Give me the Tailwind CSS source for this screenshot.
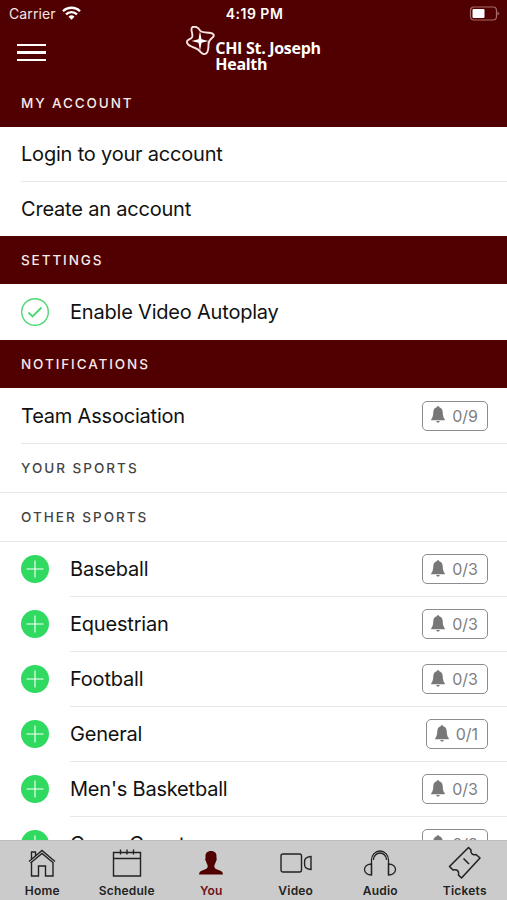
<!DOCTYPE html>
<html lang="en">
<head>
    <meta charset="UTF-8">
    <meta name="viewport" content="width=device-width, initial-scale=1.0">
    <title>You - Account &amp; Notifications</title>
    <script src="https://cdn.jsdelivr.net/npm/@tailwindcss/browser@4"></script>
</head>
<body class="bg-white font-['Inter','Liberation_Sans',sans-serif] text-[#111]">
    <!-- Shared icons -->
    <svg class="hidden">
        <symbol id="bell" viewBox="0 0 14 17">
            <path d="M7 0.3c.9 0 1.2.5 1.3 1 2.3.7 3.3 2.400 3.400 4.800.1 3.600.6 5.600 2.100 7.200v.9H.2v-.9c1.500-1.600 2-3.600 2.100-7.200.1-2.400 1.100-4.100 3.400-4.800.1-.5.4-1 1.300-1zM5.300 14.900h3.400c-.1 1-.8 1.600-1.700 1.600s-1.600-.6-1.700-1.600z" fill="#777"/>
        </symbol>
        <symbol id="plus" viewBox="0 0 28 28">
            <circle cx="14" cy="14" r="14" fill="#30d960"/>
            <path d="M14 5.500v17M5.500 14h17" stroke="#fff" stroke-width="1.100"/>
        </symbol>
    </svg>

    <div class="flex flex-col h-[900px] overflow-hidden">
        <!-- Header -->
        <header class="shrink-0 bg-[#500000] text-white">
            <div class="grid grid-cols-3 items-center h-[27px] pl-[9px] pr-[7px] text-[14px]">
                <div class="flex items-center gap-[6px] text-[#f5e6e4]">
                    <span class="tracking-[0.1px]">Carrier</span>
                    <svg class="w-[19px] h-[14px] -mt-[2px]" viewBox="0 0 19 14" fill="none" stroke="#fff" stroke-width="2.300">
                        <path d="M1 5.200a12.200 12.200 0 0 1 17 0M4 8.400a7.800 7.800 0 0 1 11 0"/>
                        <path d="M9.500 13.800L6.500 10.800a4.300 4.300 0 0 1 6 0z" fill="#fff" stroke="none"/>
                    </svg>
                </div>
                <span class="text-center font-semibold tracking-[0.5px]">4:19 PM</span>
                <svg class="justify-self-end w-[31px] h-[15px]" viewBox="0 0 31 15">
                    <rect x="1.500" y="1" width="26" height="13" rx="3.500" fill="none" stroke="#a86a66" stroke-width="1.200"/>
                    <rect x="3.500" y="3" width="12" height="9" rx="1" fill="#fff"/>
                    <path d="M28.500 5.500v4l2-2z" fill="#a86a66"/>
                </svg>
            </div>
            <div class="grid grid-cols-3 h-[52px] px-[17px]">
                <button class="flex flex-col gap-[5px] mt-[17px] h-[17px] w-[29px]">
                    <span class="block h-[2.5px] w-full bg-white"></span>
                    <span class="block h-[2.5px] w-full bg-white"></span>
                    <span class="block h-[2.5px] w-full bg-white"></span>
                </button>
                <div class="flex justify-center">
                    <svg class="shrink-0 w-[29px] h-[30px] -mt-[1px]" viewBox="0 0 29 30">
                        <path d="M6.500 1C9.500.3 12.500 1.500 14 4.500c1.500 2 4.500 2 9.500 2.300 4.500.3 5.300 2.700 3 4.700-3 2.300-4 4-4 6.500 0 3.500.2 6.500-1.800 9-2 1.800-4.200 1.300-6-.8-1.500-2.500-4.500-4-8.200-5.200C3 19.500.3 17.500 1 15.300c.5-1.800 3-1.800 5-4C7.800 8.500 3.500 3 6.500 1z" fill="none" stroke="#f7e4e2" stroke-width="1.900"/>
                        <path d="M14 5l1.500 8.300 7 1.700-7 1.700L14 25l-1.500-8.300-7-1.700 7-1.700z" fill="#fff"/>
                    </svg>
                    <div class="mt-[13px] font-['Open_Sans','Noto_Sans',sans-serif] font-bold text-[16px] leading-[16px] tracking-[-0.3px] whitespace-nowrap">
                        <div>CHI St. Joseph</div>
                        <div>Health</div>
                    </div>
                </div>
            </div>
            <h2 class="flex items-center h-[48px] px-[21px] text-[13.5px] font-medium tracking-[1.9px] text-[#f7ebe9]">MY ACCOUNT</h2>
        </header>

        <!-- Settings list -->
        <main class="flex-1 min-h-0 overflow-hidden text-[20px] tracking-[-0.2px]">
            <div class="pl-[21px]">
                <div class="flex items-center h-[55px] border-b border-[#e8e8e8]">Login to your account</div>
                <div class="flex items-center h-[54px] pb-[1px]">Create an account</div>
            </div>

            <h2 class="flex items-center h-[48px] px-[21px] bg-[#500000] text-[13.5px] font-medium tracking-[1.9px] text-[#f7ebe9]">SETTINGS</h2>
            <div class="flex items-center h-[56px] pl-[21px] gap-[21px]">
                <svg class="w-[28px] h-[28px]" viewBox="0 0 28 28" fill="none" stroke="#4cd972">
                    <circle cx="14" cy="14" r="13.300" stroke-width="1.400"/>
                    <path d="M7.500 14.500l4 4L20.500 9.500" stroke-width="1.900"/>
                </svg>
                Enable Video Autoplay
            </div>

            <h2 class="flex items-center h-[48px] px-[21px] bg-[#500000] text-[13.5px] font-medium tracking-[1.9px] text-[#f7ebe9]">NOTIFICATIONS</h2>
            <div class="pl-[21px]">
                <div class="flex items-center justify-between h-[56px] pr-[19px] border-b border-[#e8e8e8]">
                    Team Association
                    <span class="flex items-center gap-[7px] h-[30px] pl-[8px] pr-[9px] border border-[#8c8c8c] rounded-[5px] text-[16px] tracking-normal text-[#808080]"><svg class="w-[14px] h-[17px] -mt-[2px]"><use href="#bell"/></svg>0/9</span>
                </div>
            </div>
            <h3 class="flex items-center h-[49px] px-[21px] border-b border-[#e8e8e8] text-[13.5px] font-medium tracking-[2px] text-[#444]">YOUR SPORTS</h3>
            <h3 class="flex items-center h-[49px] px-[21px] border-b border-[#e8e8e8] text-[13.5px] font-medium tracking-[2px] text-[#444]">OTHER SPORTS</h3>

            <!-- Sports -->
            <div class="flex items-center h-[55px] pl-[21px] gap-[21px]">
                <svg class="w-[28px] h-[28px] -mt-[2px]"><use href="#plus"/></svg>
                <div class="flex flex-1 items-center justify-between h-full pr-[19px] border-b border-[#e8e8e8]">
                    Baseball
                    <span class="flex items-center gap-[7px] h-[30px] pl-[8px] pr-[9px] border border-[#8c8c8c] rounded-[5px] text-[16px] tracking-normal text-[#808080]"><svg class="w-[14px] h-[17px] -mt-[2px]"><use href="#bell"/></svg>0/3</span>
                </div>
            </div>
            <div class="flex items-center h-[55px] pl-[21px] gap-[21px]">
                <svg class="w-[28px] h-[28px] -mt-[2px]"><use href="#plus"/></svg>
                <div class="flex flex-1 items-center justify-between h-full pr-[19px] border-b border-[#e8e8e8]">
                    Equestrian
                    <span class="flex items-center gap-[7px] h-[30px] pl-[8px] pr-[9px] border border-[#8c8c8c] rounded-[5px] text-[16px] tracking-normal text-[#808080]"><svg class="w-[14px] h-[17px] -mt-[2px]"><use href="#bell"/></svg>0/3</span>
                </div>
            </div>
            <div class="flex items-center h-[55px] pl-[21px] gap-[21px]">
                <svg class="w-[28px] h-[28px] -mt-[2px]"><use href="#plus"/></svg>
                <div class="flex flex-1 items-center justify-between h-full pr-[19px] border-b border-[#e8e8e8]">
                    Football
                    <span class="flex items-center gap-[7px] h-[30px] pl-[8px] pr-[9px] border border-[#8c8c8c] rounded-[5px] text-[16px] tracking-normal text-[#808080]"><svg class="w-[14px] h-[17px] -mt-[2px]"><use href="#bell"/></svg>0/3</span>
                </div>
            </div>
            <div class="flex items-center h-[55px] pl-[21px] gap-[21px]">
                <svg class="w-[28px] h-[28px] -mt-[2px]"><use href="#plus"/></svg>
                <div class="flex flex-1 items-center justify-between h-full pr-[19px] border-b border-[#e8e8e8]">
                    General
                    <span class="flex items-center gap-[7px] h-[30px] pl-[8px] pr-[9px] border border-[#8c8c8c] rounded-[5px] text-[16px] tracking-normal text-[#808080]"><svg class="w-[14px] h-[17px] -mt-[2px]"><use href="#bell"/></svg>0/1</span>
                </div>
            </div>
            <div class="flex items-center h-[55px] pl-[21px] gap-[21px]">
                <svg class="w-[28px] h-[28px] -mt-[2px]"><use href="#plus"/></svg>
                <div class="flex flex-1 items-center justify-between h-full pr-[19px] border-b border-[#e8e8e8]">
                    Men's Basketball
                    <span class="flex items-center gap-[7px] h-[30px] pl-[8px] pr-[9px] border border-[#8c8c8c] rounded-[5px] text-[16px] tracking-normal text-[#808080]"><svg class="w-[14px] h-[17px] -mt-[2px]"><use href="#bell"/></svg>0/3</span>
                </div>
            </div>
            <div class="flex items-center h-[55px] pl-[21px] gap-[21px]">
                <svg class="w-[28px] h-[28px] -mt-[2px]"><use href="#plus"/></svg>
                <div class="flex flex-1 items-center justify-between h-full pr-[19px] pb-[1px]">
                    Cross Country
                    <span class="flex items-center gap-[7px] h-[30px] pl-[8px] pr-[9px] border border-[#8c8c8c] rounded-[5px] text-[16px] tracking-normal text-[#808080]"><svg class="w-[14px] h-[17px] -mt-[2px]"><use href="#bell"/></svg>0/3</span>
                </div>
            </div>
        </main>

        <!-- Tab bar -->
        <nav class="shrink-0 grid grid-cols-6 h-[60px] pt-[6px] bg-[#cbcbcb] border-t border-[#bdbdbd] text-[12px] leading-[14px] font-semibold tracking-[0.2px] text-[#222]">
            <a class="flex flex-col items-center gap-[5px]">
                <svg class="w-[32px] h-[32px]" viewBox="0 0 32 32" fill="none" stroke="#222" stroke-width="1.400">
                    <path d="M3 14.500L16 3.500l13 11M4.500 16L16 6.500 27.500 16M5.500 12.500V5h4v4M5.500 15.500v13.500h7V19h7v10h7.500V15.500"/>
                </svg>
                Home
            </a>
            <a class="flex flex-col items-center gap-[5px]">
                <svg class="w-[32px] h-[32px]" viewBox="0 0 32 32" fill="none" stroke="#222" stroke-width="1.400">
                    <path d="M2.500 5.500h27v23.500h-27zM2.500 11.500h27M9.500 2.500v5M16 2.500v5M22.500 2.500v5"/>
                </svg>
                Schedule
            </a>
            <a class="flex flex-col items-center gap-[5px] text-[#6e1018]">
                <svg class="w-[32px] h-[32px]" viewBox="0 0 32 32" fill="#500000">
                    <path d="M16 4c3.900 0 5.600 2.300 5.500 5.500 0 .8-.1 1.300 0 1.800.5.500.2 2.200-.5 3-.5 2.300-1.700 3.200-1.700 5 0 2.200 1.200 2.700 4.200 3.600 2.800.8 4.300 1.800 4.500 4.600H4c.2-2.800 1.700-3.800 4.500-4.600 3-.9 4.200-1.400 4.200-3.600 0-1.800-1.200-2.700-1.700-5-.7-.8-1-2.500-.5-3 .1-.5 0-1 0-1.800C10.400 6.300 12.100 4 16 4z"/>
                </svg>
                You
            </a>
            <a class="flex flex-col items-center gap-[5px]">
                <svg class="w-[32px] h-[32px]" viewBox="0 0 32 32" fill="none" stroke="#222" stroke-width="1.400">
                    <rect x="1" y="7" width="20.500" height="18" rx="2"/>
                    <path d="M31 9.500v13c-2.500-.2-4.300-.8-5.500-2-1.300-1.300-1.300-7.700 0-9 1.200-1.200 3-1.800 5.500-2z"/>
                </svg>
                Video
            </a>
            <a class="flex flex-col items-center gap-[5px]">
                <svg class="w-[34px] h-[32px]" viewBox="0 0 34 32" fill="none" stroke="#222" stroke-width="1.300">
                    <path d="M8.500 28V13a8.500 9 0 0 1 17 0v15M10.500 13a6.500 7 0 0 1 13 0"/>
                    <path d="M8.500 17c-4 0-7 2.300-7 5.500s3 5.500 7 5.500zM25.500 17c4 0 7 2.300 7 5.500s-3 5.500-7 5.500z"/>
                </svg>
                Audio
            </a>
            <a class="flex flex-col items-center gap-[5px]">
                <svg class="w-[34px] h-[34px] -mt-[1px] -mb-[1px]" viewBox="0 0 34 34" fill="none" stroke="#222" stroke-width="1.600" stroke-linejoin="round">
                    <path d="M20.500 1.500L23 4c-.8 3 1.500 5.500 5 4.500l4 3.500-18.500 20-3-3c1-3.500-1-6-5.500-5L1.500 20.500z"/>
                    <path d="M15.500 12.500l5.500 5.500"/>
                </svg>
                Tickets
            </a>
        </nav>
    </div>
</body>
</html>
